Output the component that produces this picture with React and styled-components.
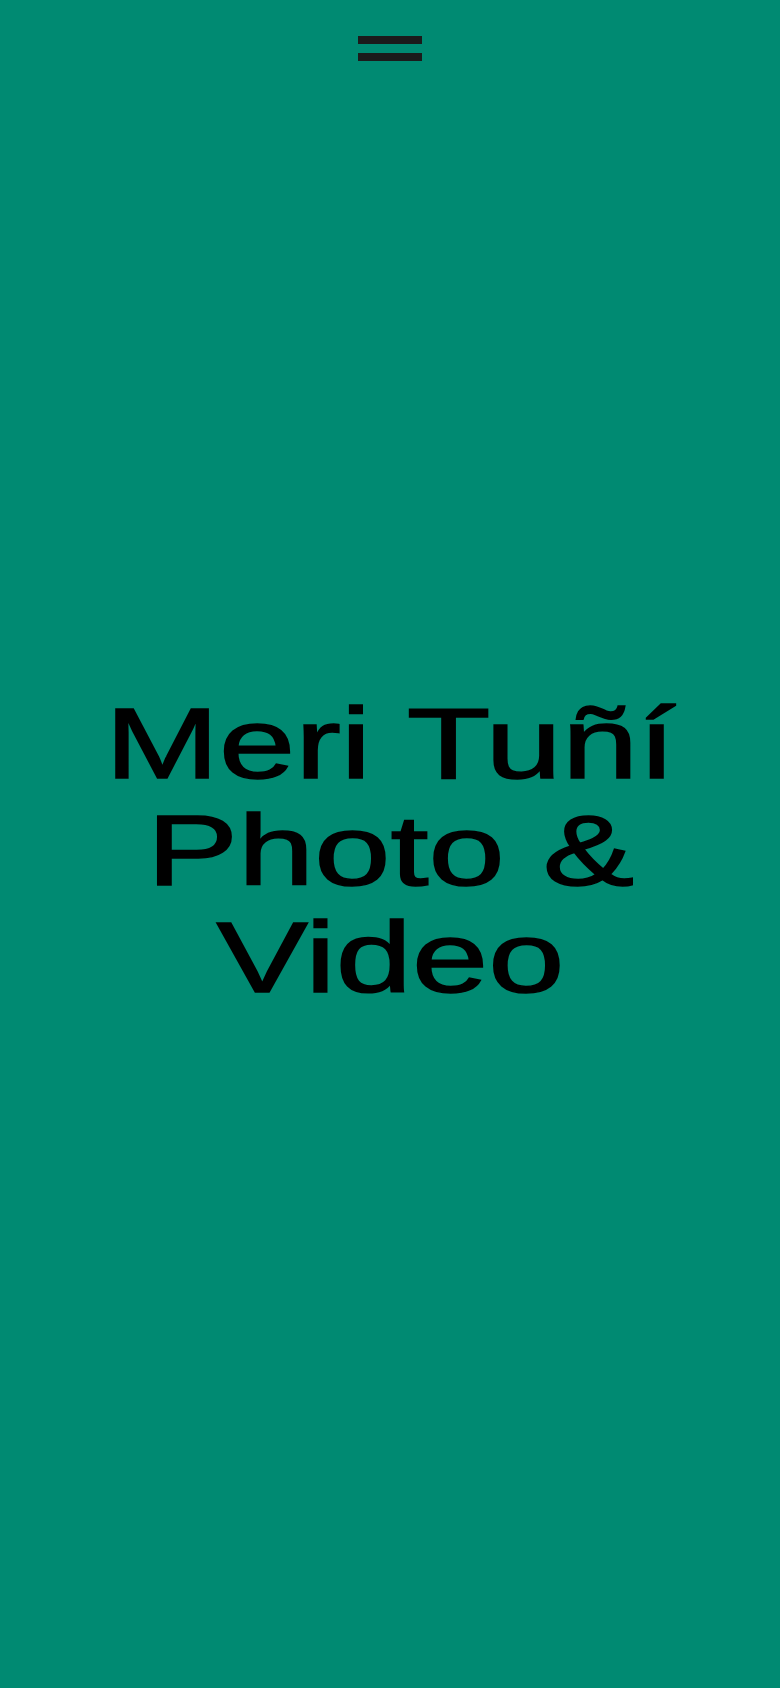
import React from 'react';
import styled, { createGlobalStyle } from 'styled-components';

const GlobalStyle = createGlobalStyle`
    html, body {
        margin: 0;
        padding: 0;
        background-color: #008a72;
    }
    body {
        font-family: "Liberation Sans", Arial, sans-serif;
    }
`;

const App = () => {
    return (
        <>
            <GlobalStyle />
            <Page>
                <Header>
                    <MenuButton aria-label="Menu">
                        <Bar />
                        <Bar />
                    </MenuButton>
                </Header>
                <Main>
                    <Title>
                        <Line>Meri Tuñí</Line>
                        <Line>Photo &amp;</Line>
                        <Line>Video</Line>
                    </Title>
                </Main>
            </Page>
        </>
    );
};

const Page = styled.div`
    position: relative;
    min-height: 100vh;
    background-color: #008a72;
    display: flex;
    flex-direction: column;
`;

const Header = styled.header`
    position: absolute;
    top: 0;
    left: 0;
    right: 0;
    display: flex;
    justify-content: center;
    padding-top: 36px;
`;

const MenuButton = styled.button`
    display: flex;
    flex-direction: column;
    gap: 9px;
    padding: 0;
    border: none;
    background: none;
    cursor: pointer;
`;

const Bar = styled.span`
    display: block;
    width: 64px;
    height: 8px;
    background-color: #1b1b1b;
`;

const Main = styled.main`
    flex: 1;
    display: flex;
    align-items: center;
    justify-content: center;
    padding-top: 13px;
`;

const Title = styled.h1`
    margin: 0;
    display: flex;
    flex-direction: column;
    align-items: center;
    font-family: "Liberation Sans", Arial, sans-serif;
    font-weight: 400;
    font-size: 100px;
    line-height: 107px;
    color: #000;
    -webkit-text-stroke: 1.5px #000;
    transform: scaleX(1.37);
`;

const Line = styled.span`
    white-space: nowrap;
`;

export default App;
